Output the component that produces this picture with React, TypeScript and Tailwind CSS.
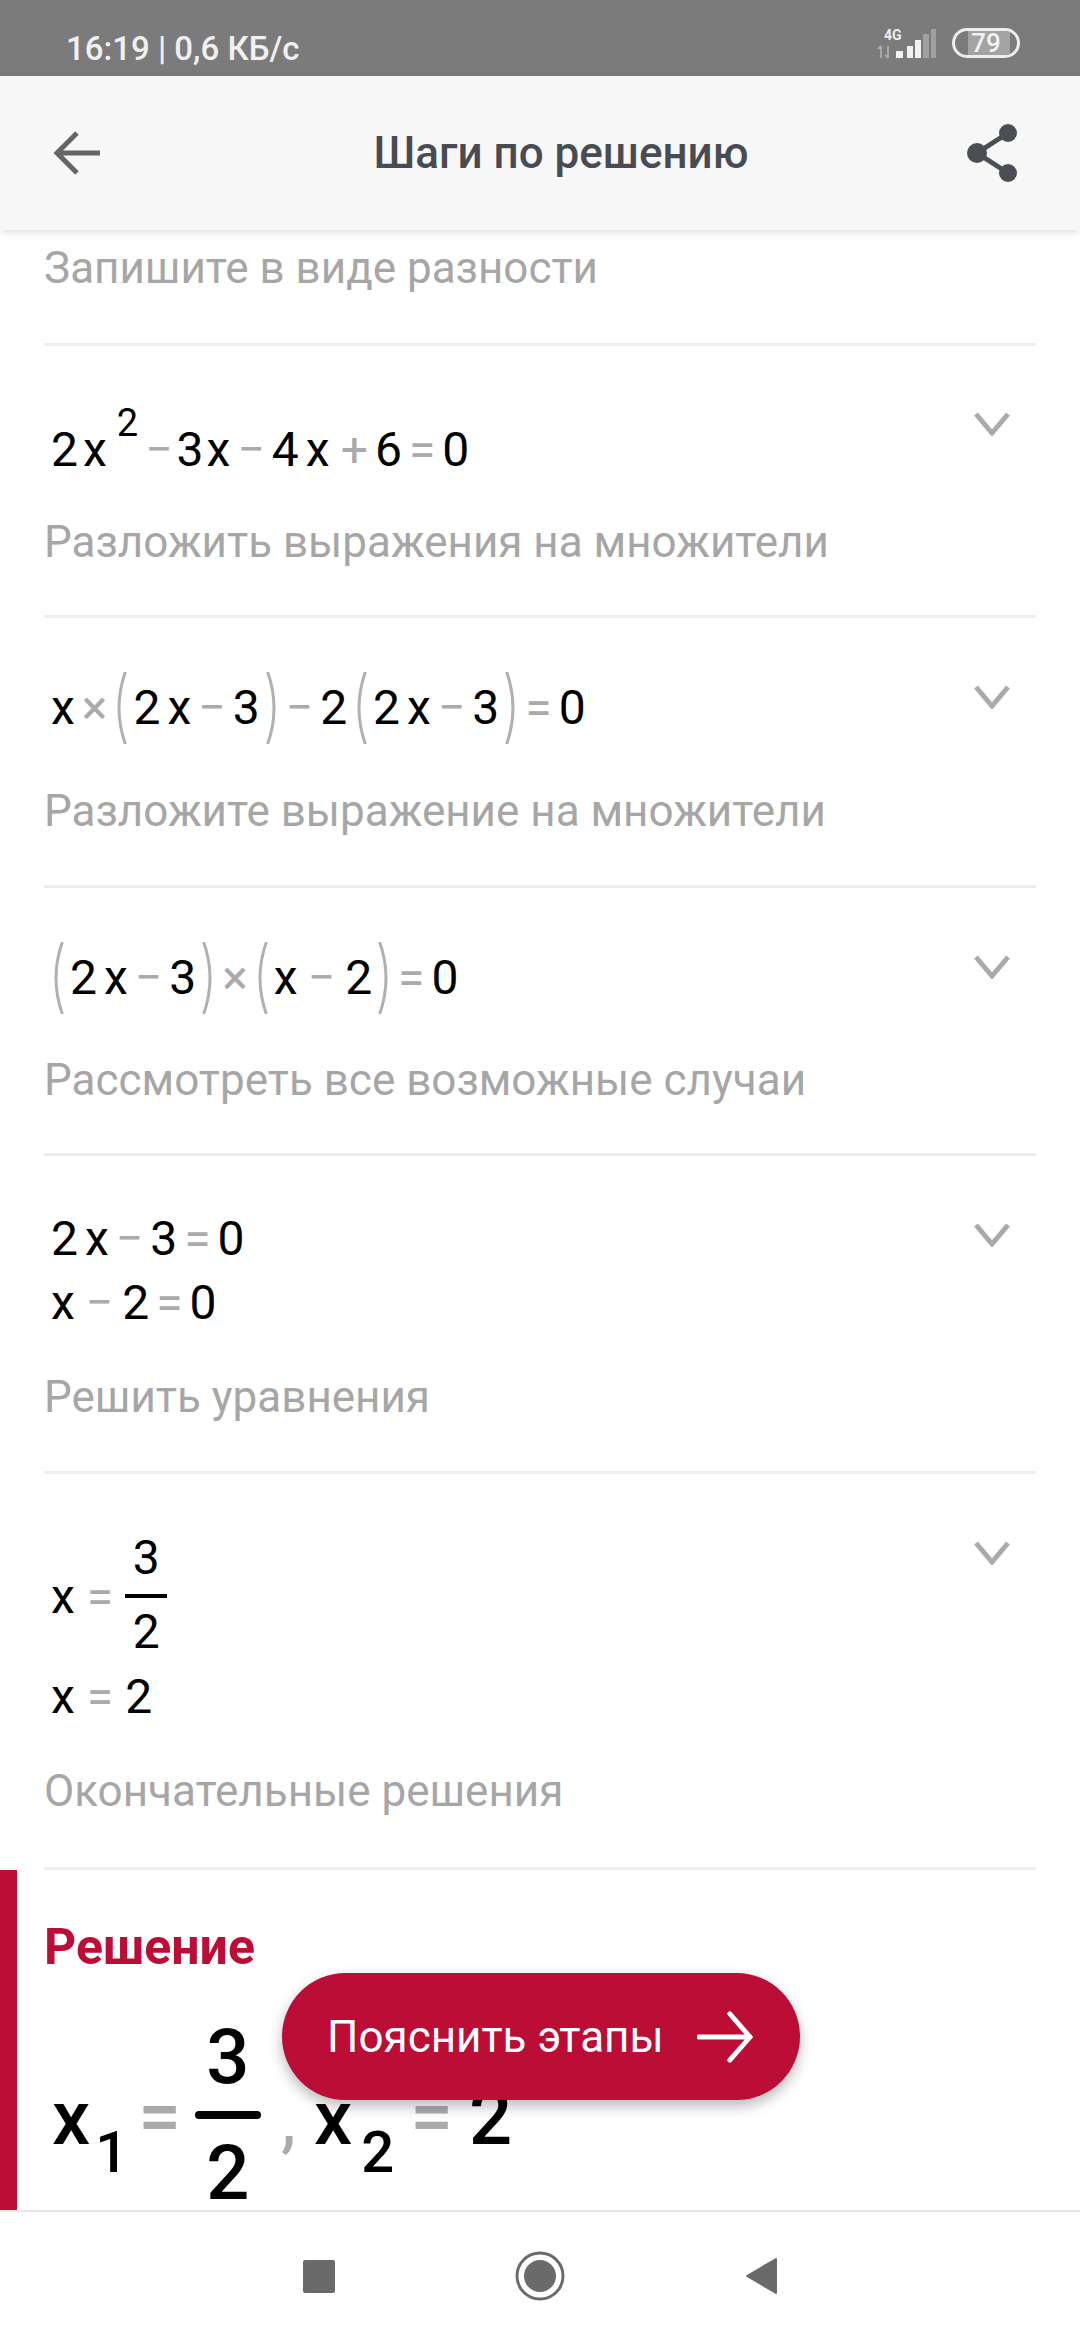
import React from "react";

const N = ({ children }: { children: React.ReactNode }) => <span className="text-black">{children}</span>;
const O = ({ children }: { children: React.ReactNode }) => <span className="text-[#aaaaaa]">{children}</span>;

const Paren = ({ flip }: { flip?: boolean }) => (
  <svg width="14" height="72" viewBox="0 0 14 72" className={flip ? "mx-[-1px] -scale-x-100" : "mx-[-1px]"}>
    <path d="M12 1 Q0 36 12 71" fill="none" stroke="#b0b0b0" strokeWidth="3" strokeLinecap="round" />
  </svg>
);

const Chevron = () => (
  <svg width="36" height="24" viewBox="0 0 36 24" className="shrink-0">
    <path d="M2 2 L18 21 L34 2" fill="none" stroke="#aaaaaa" strokeWidth="5" />
  </svg>
);

const Label = ({ children, cls }: { children: React.ReactNode; cls: string }) => (
  <div className={"text-[44px] leading-[60px] text-[#a6a6a6] " + cls}>{children}</div>
);

const Line = ({ children, cls }: { children: React.ReactNode; cls?: string }) => (
  <div className={"flex items-center gap-[7px] h-[60px] ml-[7px] text-[48px] leading-[60px] " + (cls ?? "")}>{children}</div>
);

export default function App() {
  return (
    <div className="relative w-[1080px] h-[2340px] flex flex-col bg-white font-['Roboto',sans-serif] overflow-hidden">
      {/* status bar */}
      <div className="h-[76px] shrink-0 bg-[#7b7b7b] flex items-center justify-between pl-[66px] pr-[60px] pt-[20px]">
        <span className="text-[33px] font-medium text-[#f0f0f0] leading-none">16:19 | 0,6 КБ/с</span>
        <div className="flex items-center gap-[15px] mb-[10px]">
          <svg width="60" height="31" viewBox="0 0 60 31" className="overflow-visible">
            <text x="7" y="12" fontSize="14" fontWeight="700" fill="#eeeeee" fontFamily="Roboto">4G</text>
            <path d="M4 30 V18 M1 21 L4 18 M11 18 V30 M8 27 L11 30" fill="none" stroke="#a8a8a8" strokeWidth="2" />
            <rect x="19" y="23" width="7" height="7" fill="#f2f2f2" />
            <rect x="30" y="18" width="6" height="12" fill="#f2f2f2" />
            <rect x="38" y="12" width="6" height="18" fill="#f2f2f2" />
            <rect x="46" y="6" width="6" height="24" fill="#a0a0a0" />
            <rect x="54" y="1" width="5" height="29" fill="#a0a0a0" />
          </svg>
          <div className="relative w-[68px] h-[30px] rounded-full border-[3px] border-[#eeeeee] overflow-hidden">
            <div className="h-full w-[42px] ml-[13px] bg-[#a3a3a3]" />
            <span className="absolute inset-0 flex items-center justify-center text-[26px] font-medium text-[#f2f2f2] leading-none">79</span>
          </div>
        </div>
      </div>

      {/* header */}
      <div className="relative z-10 h-[154px] shrink-0 bg-[#f7f7f7] flex items-center justify-between pl-[52px] pr-[60px] shadow-[0_2px_8px_rgba(0,0,0,0.14)]">
        <svg width="50" height="46" viewBox="0 0 50 46">
          <path d="M25 3 L5 23 L25 43 M5 23 H48" fill="none" stroke="#666666" strokeWidth="5" />
        </svg>
        <span className="text-[44px] font-medium text-[#484c52] leading-none ml-[54px]">Шаги по решению</span>
        <svg width="54" height="60" viewBox="0 0 54 60">
          <path d="M42 10 L11 30 L42 50" fill="none" stroke="#4b4f55" strokeWidth="5" />
          <circle cx="42" cy="10" r="9" fill="#4b4f55" />
          <circle cx="11" cy="30" r="10" fill="#4b4f55" />
          <circle cx="42" cy="50" r="9" fill="#4b4f55" />
        </svg>
      </div>

      {/* scroll */}
      <div className="flex-1 min-h-0 overflow-hidden flex flex-col">
        <div className="mx-[44px] border-b-[3px] border-[#eeeeee] pt-[8px] pb-[45px] shrink-0">
          <Label cls="">Запишите в виде разности</Label>
        </div>

        <div className="mx-[44px] border-b-[3px] border-[#eeeeee] shrink-0 h-[272px] flex justify-between">
          <div className="pt-[74px]">
            <Line>
              <N>2</N><N><span className="ml-[-2px]">x</span></N>
              <span className="text-[38px] text-black leading-none mb-[54px] ml-[3px]">2</span>
              <span className="text-[#aaaaaa] mr-[-3px]">−</span><N>3</N><N><span className="ml-[-4px]">x</span></N><O>−</O><N>4</N><N>x</N>
              <span className="text-[#aaaaaa] ml-[4px]">+</span><N>6</N><O>=</O><N>0</N>
            </Line>
            <Label cls="mt-[32px]">Разложить выражения на множители</Label>
          </div>
          <div className="mt-[66px] mr-[26px]"><Chevron /></div>
        </div>

        <div className="mx-[44px] border-b-[3px] border-[#eeeeee] shrink-0 h-[270px] flex justify-between">
          <div className="pt-[60px]">
            <Line>
              <N>x</N><O>×</O><Paren /><N>2</N><N>x</N><O>−</O><N>3</N><Paren flip /><O>−</O><N>2</N><Paren /><N>2</N><N>x</N><O>−</O><N>3</N><Paren flip /><O>=</O><N>0</N>
            </Line>
            <Label cls="mt-[43px]">Разложите выражение на множители</Label>
          </div>
          <div className="mt-[67px] mr-[26px]"><Chevron /></div>
        </div>

        <div className="mx-[44px] border-b-[3px] border-[#eeeeee] shrink-0 h-[268px] flex justify-between">
          <div className="pt-[60px]">
            <Line cls="ml-[5px]">
              <Paren /><N>2</N><N>x</N><O>−</O><N>3</N><Paren flip /><O>×</O><Paren /><N>x</N>
              <span className="text-[#aaaaaa] ml-[3px]">−</span>
              <span className="text-black ml-[3px]">2</span>
              <Paren flip /><O>=</O><N>0</N>
            </Line>
            <Label cls="mt-[42px]">Рассмотреть все возможные случаи</Label>
          </div>
          <div className="mt-[67px] mr-[26px]"><Chevron /></div>
        </div>

        <div className="mx-[44px] border-b-[3px] border-[#eeeeee] shrink-0 h-[318px] flex justify-between">
          <div className="pt-[53px]">
            <Line cls="mb-[4px]"><N>2</N><N>x</N><O>−</O><N>3</N><O>=</O><N>0</N></Line>
            <Line>
              <N>x</N>
              <span className="text-[#aaaaaa] ml-[4px]">−</span>
              <span className="text-black ml-[2px]">2</span>
              <O>=</O><N>0</N>
            </Line>
            <Label cls="mt-[34px]">Решить уравнения</Label>
          </div>
          <div className="mt-[67px] mr-[26px]"><Chevron /></div>
        </div>

        <div className="mx-[44px] border-b-[3px] border-[#eeeeee] shrink-0 h-[396px] flex justify-between">
          <div className="pt-[59px]">
            <Line cls="h-[124px] gap-[12px]">
              <span className="text-black mt-[4px]">x</span>
              <span className="text-[#aaaaaa] mt-[4px]">=</span>
              <div className="flex flex-col items-center w-[42px] text-black">
                <span className="leading-[50px] mb-[11px]">3</span>
                <span className="w-full h-[4px] bg-black" />
                <span className="leading-[50px] mt-[9px]">2</span>
              </div>
            </Line>
            <Line cls="gap-[12px] mt-[10px]"><N>x</N><O>=</O><N>2</N></Line>
            <Label cls="mt-[34px]">Окончательные решения</Label>
          </div>
          <div className="mt-[67px] mr-[26px]"><Chevron /></div>
        </div>

        <div className="flex-1 min-h-0 border-l-[17px] border-[#bb0d35] pl-[27px] overflow-hidden">
          <div className="text-[50px] leading-[60px] font-bold text-[#bb0d35] mt-[47px]">Решение</div>
          <div className="flex items-center ml-[8px] mt-[50px] text-[76px] font-medium text-black">
            <span className="leading-none mt-[6px]">x</span>
            <span className="text-[58px] leading-none mt-[74px] ml-[5px]">1</span>
            <span className="text-[#aaaaaa] leading-none mt-[2px] ml-[10px]">=</span>
            <div className="flex flex-col items-center gap-[24px] w-[66px] ml-[14px]">
              <span className="leading-[60px]">3</span>
              <span className="w-full h-[8px] rounded-full bg-black" />
              <span className="leading-[60px]">2</span>
            </div>
            <span className="text-[#aaaaaa] font-normal leading-none mt-[6px] ml-[20px]">,</span>
            <span className="leading-none mt-[6px] ml-[18px]">x</span>
            <span className="text-[58px] leading-none mt-[74px] ml-[9px]">2</span>
            <span className="text-[#aaaaaa] leading-none mt-[2px] ml-[16px]">=</span>
            <span className="leading-none mt-[6px] ml-[16px]">2</span>
          </div>
        </div>
      </div>

      {/* nav */}
      <div className="h-[130px] shrink-0 bg-white border-t-[2px] border-[#e6e6e6] flex items-center justify-center gap-[180px]">
        <div className="w-[32px] h-[33px] rounded-[2px] bg-[#6a6a6a]" />
        <svg width="50" height="50" viewBox="0 0 50 50">
          <circle cx="25" cy="25" r="23" fill="none" stroke="#6a6a6a" strokeWidth="3" />
          <circle cx="25" cy="25" r="16" fill="#6a6a6a" />
        </svg>
        <svg width="32" height="38" viewBox="0 0 32 38">
          <path d="M31 2 V36 L2 19 Z" fill="#6a6a6a" stroke="#6a6a6a" strokeWidth="2" strokeLinejoin="round" />
        </svg>
      </div>

      {/* FAB */}
      <div className="absolute left-[282px] top-[1973px] w-[518px] h-[127px] rounded-[64px] bg-[#bb0d35] shadow-[0_6px_14px_rgba(0,0,0,0.28)] flex items-center pl-[45px] gap-[33px]">
        <span className="text-[44px] text-white leading-none">Пояснить этапы</span>
        <svg width="56" height="52" viewBox="0 0 58 52">
          <path d="M34 2 L55 26 L34 50 M2 26 H55" fill="none" stroke="#ffffff" strokeWidth="5" strokeLinecap="round" />
        </svg>
      </div>
    </div>
  );
}
